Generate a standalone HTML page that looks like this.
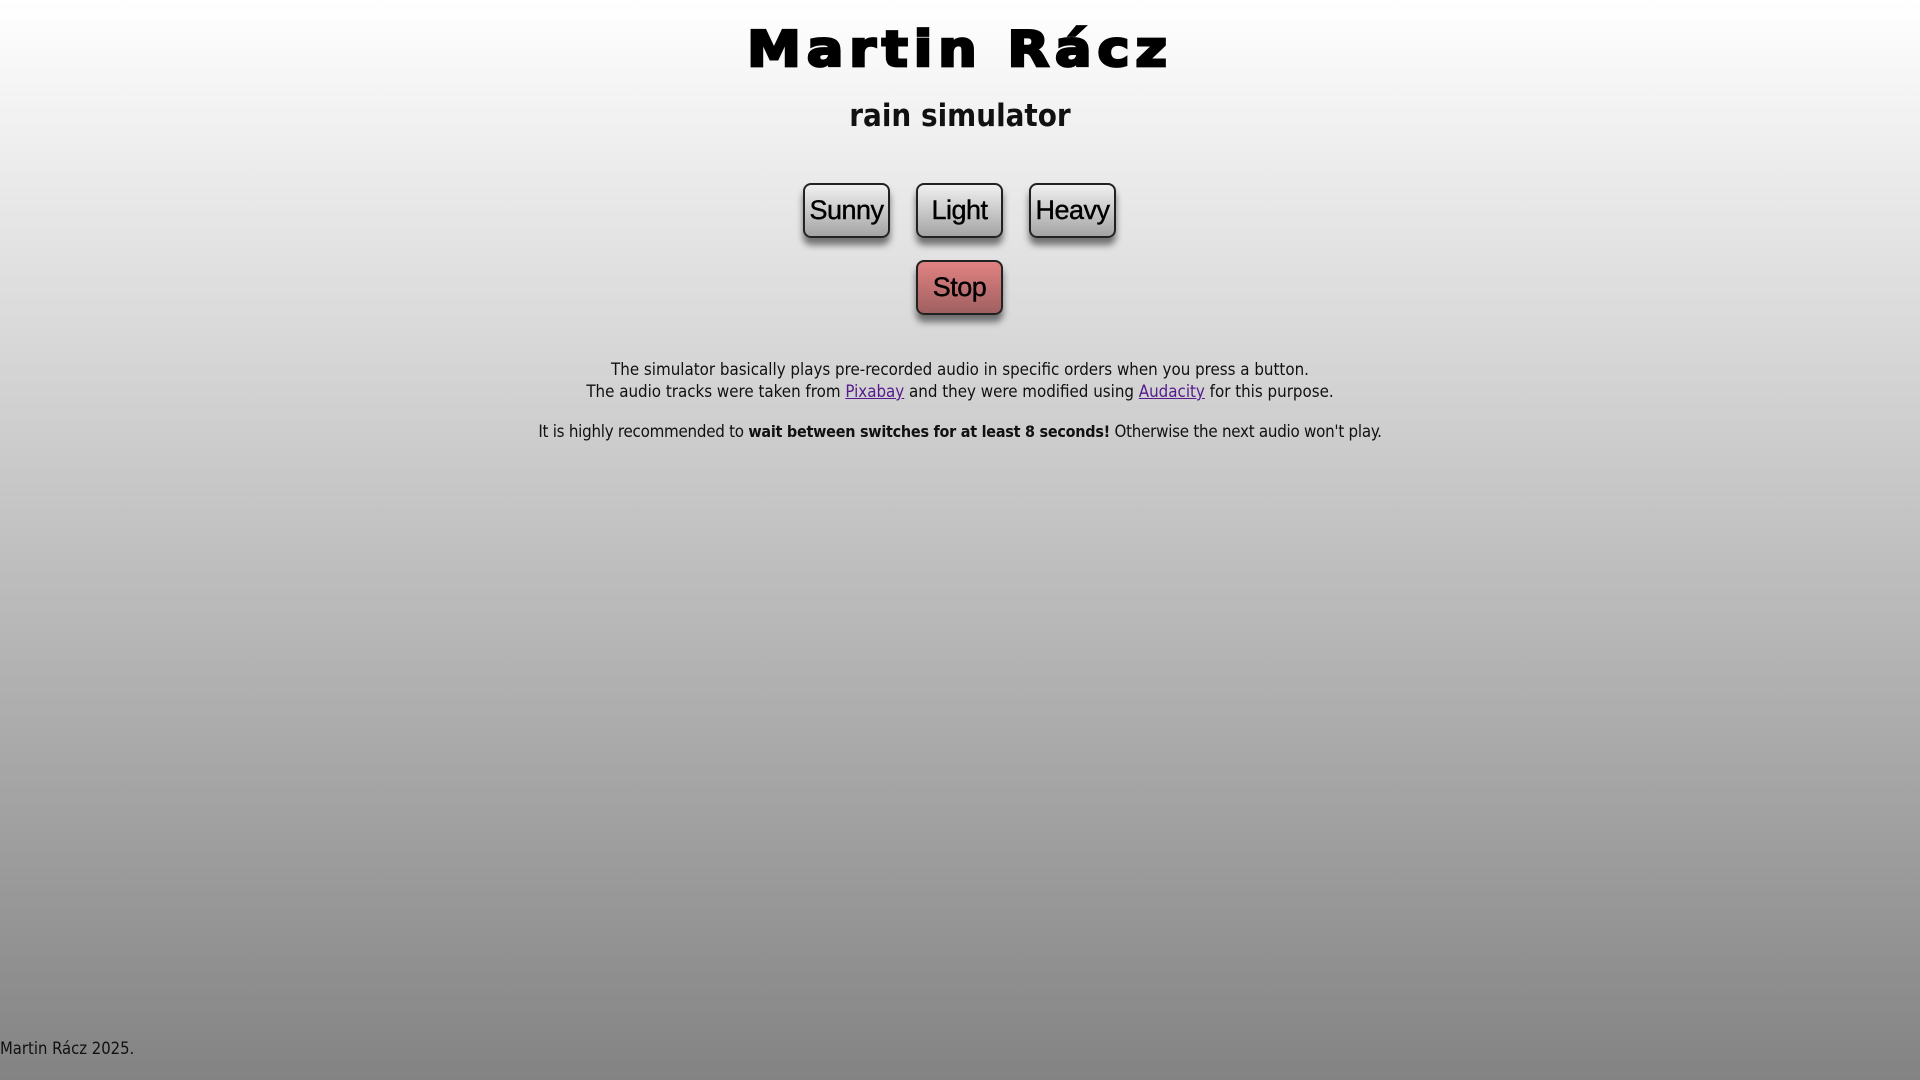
<!DOCTYPE html>
<html><head><meta charset="utf-8"><style>
html,body{margin:0;padding:0;width:1920px;height:1080px;overflow:hidden}
body{background:linear-gradient(#ffffff,#838383);font-family:"DejaVu Sans Condensed","Liberation Sans",sans-serif;color:#111;position:relative}
h1{position:absolute;top:18px;left:0;width:1920px;text-align:center;margin:0;font:bold 54px "DejaVu Sans","Liberation Sans",sans-serif;letter-spacing:6px;-webkit-text-stroke:3px #000;color:#000;transform:scaleY(0.9)}
h2{position:absolute;top:98px;left:0;width:1920px;text-align:center;margin:0;font-weight:bold;font-size:31px;font-family:"DejaVu Sans Condensed","Liberation Sans",sans-serif}
.b{position:absolute;width:83px;height:51px;border:2px solid #222;border-radius:8px;background:linear-gradient(#f0f0f0,#a4a4a4);box-shadow:0 7px 7px rgba(0,0,0,.5);font:27px "Liberation Sans",sans-serif;text-align:center;line-height:51px;color:#000;letter-spacing:-0.5px;-webkit-text-stroke:0.4px #000}
.s{background:linear-gradient(#e28282,#a06060)}
.t{position:absolute;left:0;width:1920px;text-align:center;font-size:16.8px;line-height:22px}
.t b{font-size:16px}
.t3{letter-spacing:-0.25px}
a{color:#551a8b}
.f{position:absolute;left:0;top:1039px;font-size:16.5px}
</style></head><body>
<h1>Martin Rácz</h1>
<h2>rain simulator</h2>
<div class="b" style="left:803px;top:183px">Sunny</div>
<div class="b" style="left:916px;top:183px">Light</div>
<div class="b" style="left:1029px;top:183px">Heavy</div>
<div class="b s" style="left:916px;top:260px">Stop</div>
<div class="t" style="top:358px">The simulator basically plays pre-recorded audio in specific orders when you press a button.<br>The audio tracks were taken from <a href="#">Pixabay</a> and they were modified using <a href="#">Audacity</a> for this purpose.</div>
<div class="t t3" style="top:420px">It is highly recommended to <b>wait between switches for at least 8 seconds!</b> Otherwise the next audio won't play.</div>
<div class="f">Martin Rácz 2025.</div>
</body></html>
